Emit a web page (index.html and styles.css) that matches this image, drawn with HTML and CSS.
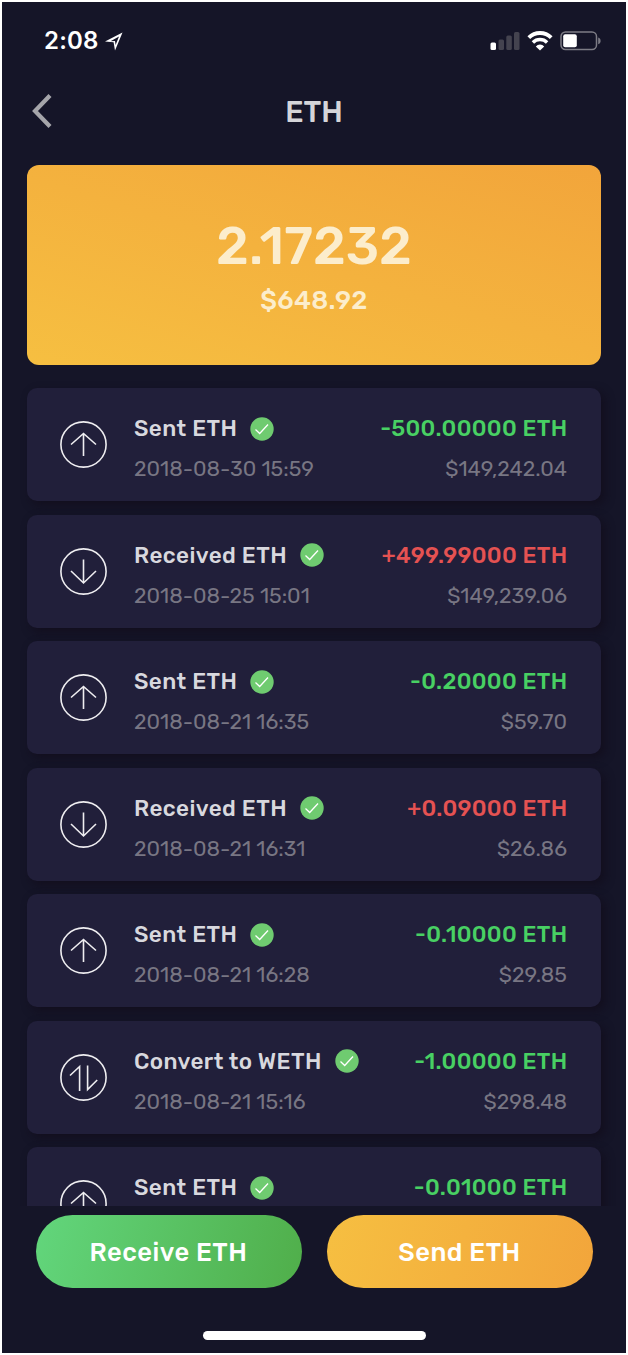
FILE: index.html
```
<!DOCTYPE html>
<html lang="en">
<head>
    <meta charset="UTF-8">
    <meta name="viewport" content="width=device-width, initial-scale=1.0">
    <title>ETH</title>
    <link rel="stylesheet" href="styles.css">
</head>
<body>
    <svg class="symbols" width="0" height="0">
        <symbol id="up" viewBox="0 0 47 47">
            <circle cx="23.5" cy="23.5" r="22.6"/>
            <path d="M23.5 35V12.5M11 23.5l12.5-11L36 23.5"/>
        </symbol>
        <symbol id="down" viewBox="0 0 47 47">
            <circle cx="23.5" cy="23.5" r="22.6"/>
            <path d="M23.5 11.5V35M11 23l12.5 12L36 23"/>
        </symbol>
        <symbol id="convert" viewBox="0 0 47 47">
            <circle cx="23.5" cy="23.5" r="22.6"/>
            <path d="M10 21.5l9.6-9V37M27.6 11.5V35.5l9.6-9.5"/>
        </symbol>
        <symbol id="check" viewBox="0 0 24 24">
            <circle cx="12" cy="12" r="11.7"/>
            <path d="M5.5 12.5l4.2 4L18 7.5"/>
        </symbol>
    </svg>
    <div class="screen">
        <div class="status-bar">
            <span class="time">2:08</span>
            <svg class="location" width="18" height="19" viewBox="0 0 18 19">
                <path fill-rule="evenodd" d="M0 9.500L17.500 0.500 10 18.500 8.600 10.300zM5.500 9.200L10 8.900 10.600 13 14 4.500z"/>
            </svg>
            <div class="status-icons">
                <svg width="30" height="20" viewBox="0 0 30 20">
                    <rect x="0.5" y="11.5" width="5.5" height="7.5" rx="1.5" fill="#fff"/>
                    <rect x="8.5" y="8.5" width="5.5" height="10.5" rx="1.5" fill="#44434f"/>
                    <rect x="16.3" y="4.5" width="5.5" height="14.5" rx="1.5" fill="#44434f"/>
                    <rect x="24" y="1" width="5.5" height="18" rx="1.5" fill="#44434f"/>
                </svg>
                <svg width="26" height="20" viewBox="0 0 26 20">
                    <path d="M1.8 6.6a16 16 0 0 1 22.4 0" fill="none" stroke="#fff" stroke-width="3.9"/>
                    <path d="M5.9 11.5a10 10 0 0 1 14.2 0" fill="none" stroke="#fff" stroke-width="3.4"/>
                    <path d="M8.8 15.4a5.700 5.700 0 0 1 8.400 0L13 19.400z" fill="#fff"/>
                </svg>
                <svg width="42" height="20" viewBox="0 0 42 20">
                    <rect x="1" y="1" width="35.5" height="17.6" rx="4.5" fill="none" stroke="#7d7c85" stroke-width="1.5"/>
                    <rect x="3.2" y="3.2" width="13.6" height="13" rx="2" fill="#fff"/>
                    <path d="M38.2 6.5c3.2 1 3.2 5.8 0 6.8z" fill="#7d7c85"/>
                </svg>
            </div>
        </div>
        <div class="header">
            <svg class="back" width="22" height="36" viewBox="0 0 22 36">
                <path d="M19 2.5L4 18 19 33.5"/>
            </svg>
            <h1>ETH</h1>
        </div>
        <div class="balance">
            <p class="balance-amount">2.17232</p>
            <p class="balance-value">$648.92</p>
        </div>
        <div class="list">
            <div class="item">
                <svg class="item-icon"><use href="#up"/></svg>
                <div class="item-info">
                    <p class="item-title">Sent ETH <svg class="check"><use href="#check"/></svg></p>
                    <p class="item-date">2018-08-30 15:59</p>
                </div>
                <div class="item-amount">
                    <p class="green">-500.00000 ETH</p>
                    <p class="item-value">$149,242.04</p>
                </div>
            </div>
            <div class="item">
                <svg class="item-icon"><use href="#down"/></svg>
                <div class="item-info">
                    <p class="item-title">Received ETH <svg class="check"><use href="#check"/></svg></p>
                    <p class="item-date">2018-08-25 15:01</p>
                </div>
                <div class="item-amount">
                    <p class="red">+499.99000 ETH</p>
                    <p class="item-value">$149,239.06</p>
                </div>
            </div>
            <div class="item">
                <svg class="item-icon"><use href="#up"/></svg>
                <div class="item-info">
                    <p class="item-title">Sent ETH <svg class="check"><use href="#check"/></svg></p>
                    <p class="item-date">2018-08-21 16:35</p>
                </div>
                <div class="item-amount">
                    <p class="green">-0.20000 ETH</p>
                    <p class="item-value">$59.70</p>
                </div>
            </div>
            <div class="item">
                <svg class="item-icon"><use href="#down"/></svg>
                <div class="item-info">
                    <p class="item-title">Received ETH <svg class="check"><use href="#check"/></svg></p>
                    <p class="item-date">2018-08-21 16:31</p>
                </div>
                <div class="item-amount">
                    <p class="red">+0.09000 ETH</p>
                    <p class="item-value">$26.86</p>
                </div>
            </div>
            <div class="item">
                <svg class="item-icon"><use href="#up"/></svg>
                <div class="item-info">
                    <p class="item-title">Sent ETH <svg class="check"><use href="#check"/></svg></p>
                    <p class="item-date">2018-08-21 16:28</p>
                </div>
                <div class="item-amount">
                    <p class="green">-0.10000 ETH</p>
                    <p class="item-value">$29.85</p>
                </div>
            </div>
            <div class="item">
                <svg class="item-icon"><use href="#convert"/></svg>
                <div class="item-info">
                    <p class="item-title">Convert to WETH <svg class="check"><use href="#check"/></svg></p>
                    <p class="item-date">2018-08-21 15:16</p>
                </div>
                <div class="item-amount">
                    <p class="green">-1.00000 ETH</p>
                    <p class="item-value">$298.48</p>
                </div>
            </div>
            <div class="item">
                <svg class="item-icon"><use href="#up"/></svg>
                <div class="item-info">
                    <p class="item-title">Sent ETH <svg class="check"><use href="#check"/></svg></p>
                </div>
                <div class="item-amount">
                    <p class="green">-0.01000 ETH</p>
                </div>
            </div>
        </div>
        <div class="actions">
            <button class="button receive">Receive ETH</button>
            <button class="button send">Send ETH</button>
        </div>
        <div class="home-indicator"></div>
    </div>
</body>
</html>
```
FILE: styles.css
```
* {
    box-sizing: border-box;
    margin: 0;
    padding: 0;
}

body {
    background: #fff;
    padding: 2px;
    font-family: Rubik, Inter, "Liberation Sans", sans-serif;
}

.symbols {
    position: absolute;
}

.screen {
    width: 624px;
    height: 1351px;
    background: #151528;
    display: flex;
    flex-direction: column;
    overflow: hidden;
}

/* status bar */
.status-bar {
    height: 77px;
    padding: 0 24px 0 42px;
    display: flex;
    align-items: center;
    color: #fff;
}

.time {
    font-family: Inter, sans-serif;
    font-size: 24px;
    font-weight: 600;
    letter-spacing: 0.2px;
}

.location {
    margin: 2px 0 0 6px;
    fill: #fff;
}

.status-icons {
    margin-left: auto;
    display: flex;
    gap: 7px;
}

/* header */
.header {
    height: 86px;
    padding: 14px 29px 0;
    display: grid;
    grid-template-columns: 22px 1fr 22px;
    align-items: start;
}

.back {
    fill: none;
    stroke: #a5a5aa;
    stroke-width: 4.2;
}

.header h1 {
    color: #d5d5d9;
    font-size: 29.5px;
    font-weight: 500;
    line-height: 38px;
    text-align: center;
}

/* balance */
.balance {
    height: 199.5px;
    margin: 0 25px;
    padding-top: 51px;
    border-radius: 12px;
    background: linear-gradient(17deg, #f6bf41 0%, #f2a53b 100%);
    color: #fcedcc;
    text-align: center;
    flex-shrink: 0;
}

.balance-amount {
    font-size: 53px;
    font-weight: 500;
    line-height: 60px;
}

.balance-value {
    font-size: 26px;
    font-weight: 500;
    line-height: 50px;
    letter-spacing: 0.4px;
}

/* transactions */
.list {
    height: 841.5px;
    padding: 23.5px 25px 0;
    display: flex;
    flex-direction: column;
    gap: 13.5px;
    overflow: hidden;
    flex-shrink: 0;
}

.item {
    height: 113px;
    padding: 20px 34px 0 33px;
    border-radius: 10px;
    background: #211f3a;
    box-shadow: 4px 4px 10px rgba(16, 10, 24, 0.6);
    display: flex;
    flex-shrink: 0;
    font-size: 22.5px;
    line-height: 41px;
    white-space: nowrap;
}

.item-icon {
    width: 47px;
    height: 47px;
    margin: 13px 27px 0 0;
    fill: none;
    stroke: #eeedf0;
    stroke-width: 1.6;
}

.item-title {
    display: flex;
    align-items: center;
    color: #d8d8de;
    font-weight: 500;
    letter-spacing: 0.4px;
}

.check {
    width: 24px;
    height: 24px;
    margin-left: 13px;
    fill: #6fcb70;
    stroke: #fff;
    stroke-width: 1.3;
}

#check circle {
    stroke: none;
}

#check path {
    fill: none;
}

.item-date,
.item-value {
    color: #787683;
    font-size: 21.3px;
    line-height: 39px;
}

.item-amount {
    margin-left: auto;
    text-align: right;
    font-weight: 500;
}

.item-value {
    font-weight: 400;
}

.green,
.red {
    margin-right: -0.5px;
    letter-spacing: 0.32px;
}

.green {
    color: #48d063;
}

.red {
    color: #e55252;
}

/* bottom buttons */
.actions {
    padding: 9px 33.5px 0;
    display: flex;
    gap: 25px;
}

.button {
    flex: 1;
    height: 73px;
    border: none;
    border-radius: 37px;
    color: #fff;
    font-family: inherit;
    font-size: 25.5px;
    font-weight: 500;
    letter-spacing: 0.5px;
}

.receive {
    background: linear-gradient(105deg, #62d67c 0%, #50ae4a 100%);
}

.send {
    background: linear-gradient(105deg, #f6bf41 0%, #f2a53b 100%);
}

.home-indicator {
    width: 223px;
    height: 9px;
    margin: 43px auto 0;
    border-radius: 5px;
    background: #fff;
}
```
